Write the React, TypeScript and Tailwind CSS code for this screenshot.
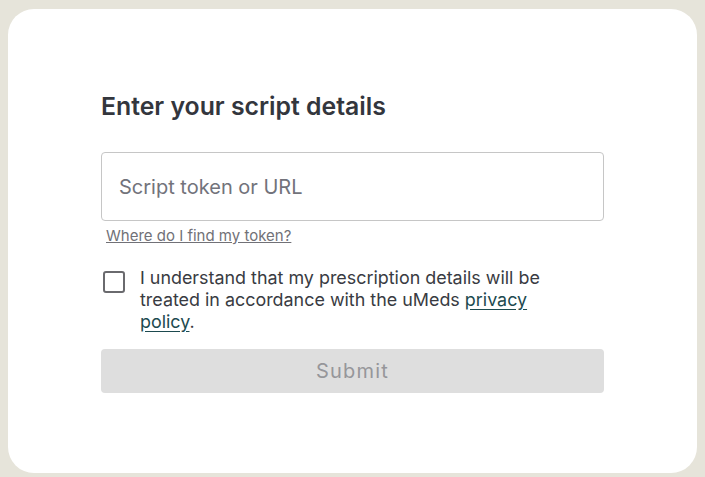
import { useState } from "react";

export default function App() {
  const [token, setToken] = useState("");
  const [agreed, setAgreed] = useState(false);

  return (
    <div className="w-[705px] h-[477px] bg-[#e6e4da] pl-[8px] pt-[9px] pr-[8px] pb-[4px]" style={{ fontFamily: "Inter, 'Noto Sans', sans-serif" }}>
      <div className="w-[689px] h-[464px] bg-white rounded-[26px] pl-[93px] pt-[82px]">
        <div className="w-[503px] flex flex-col">
          <h1 className="text-[24.8px] leading-[30px] font-semibold text-[#33363d]">Enter your script details</h1>

          <input
            value={token}
            onChange={(e) => setToken(e.target.value)}
            placeholder="Script token or URL"
            className="mt-[31px] h-[69px] w-full border border-[#c6c6c6] rounded-[4px] px-[17px] text-[20px] text-[#33363d] placeholder:text-[#72737b] outline-none"
          />
          <a href="#" className="mt-[5px] ml-[5px] text-[15px] leading-[20px] text-[#717177] underline self-start">
            Where do I find my token?
          </a>

          <label className="mt-[21px] flex items-start gap-[15px] cursor-pointer">
            <span
              onClick={() => setAgreed(!agreed)}
              className={`mt-[4px] ml-[2px] w-[22px] h-[22px] shrink-0 rounded-[3px] border-2 border-[#6a6a6e] ${agreed ? "bg-[#1d4a4f]" : "bg-white"}`}
            />
            <span className="w-[410px] text-[17.9px] leading-[22px] text-[#393b42]">
              I understand that my prescription details will be treated in accordance with the uMeds{" "}
              <a href="#" className="text-[#1d4a4f] underline underline-offset-[3px]">privacy policy</a>.
            </span>
          </label>

          <button
            disabled={!agreed || !token}
            className="mt-[16px] h-[44px] w-full rounded-[4px] bg-[#dedede] text-[20px] tracking-[1.2px] text-[#96969a]"
          >
            Submit
          </button>
        </div>
      </div>
    </div>
  );
}
